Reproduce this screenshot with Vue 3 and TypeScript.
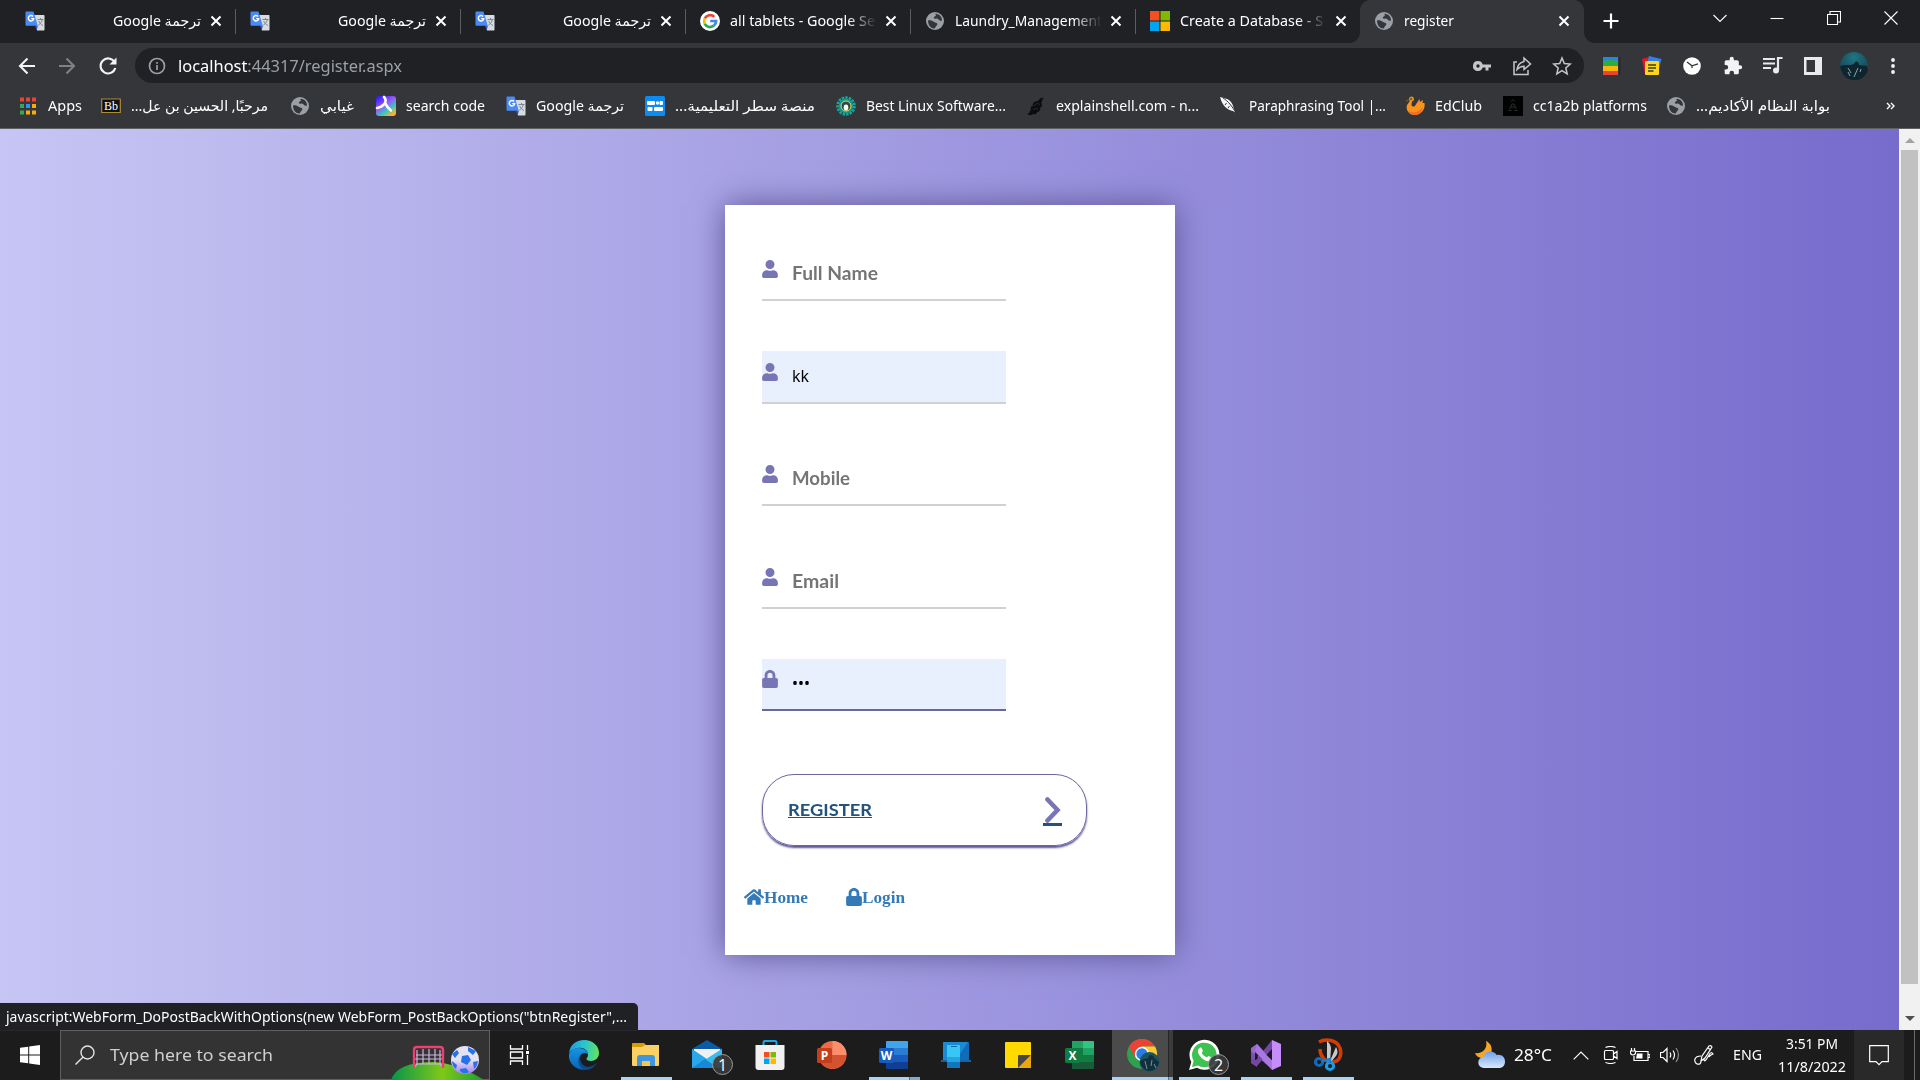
<script setup lang="ts">
import type { Directive } from 'vue'

// Stretches or condenses a single-line label to a set width in pixels.
const vFit: Directive<HTMLElement, number> = {
  mounted(el, binding) {
    const natural = el.getBoundingClientRect().width
    if (!natural) return
    el.style.transform = `scaleX(${binding.value / natural})`
    el.style.marginRight = `${binding.value - natural}px`
  },
}

const globe =
  '<circle cx="10" cy="10" r="9" fill="#9aa0a6"/><path d="M3 9.500c2.200-.6 4.300.2 5.600 1.300 1.400 1.200 3.100.6 3.700 1.900.5 1.200-1 2-1.700 3.100-.4.7-.2 1.700-1.100 1.700C5.800 17.500 3 14.300 3 9.500zM10.300 2.800c1.900-.1 4.300.9 5.500 2.700.9 1.300 1.200 2.800 1.100 4.200-1.400.3-2.500-.3-3.300-1.200-.8-1-2-1.100-3-.8-1.300.3-2.300-.6-1.600-1.700.5-.8 1.700-.8 1.900-1.600.1-.6-.6-.9-.6-1.600z" fill="#35363a"/>'
const translate =
  '<path d="M9 4h9.500c.6 0 1 .4 1 1v13.500c0 .6-.4 1-1 1H12z" fill="#d9dcdf"/><path d="M1.500.5h7l4.300 14.300H1.500c-.6 0-1-.4-1-1V1.500c0-.6.4-1 1-1z" fill="#4a8af4"/><path d="M9.700 14.800h3.100l-1 4.500z" fill="#2a56c6"/><path d="M8 5.400a2.700 2.700 0 1 0 .7 2.200H6.200" fill="none" stroke="#fff" stroke-width="1.400"/><path d="M12.500 8.500h6M15.500 7v1.500M17.300 8.500c-.5 2.500-2 4.500-4 5.700M13.700 10c.7 1.800 2.200 3.500 4.300 4.500" fill="none" stroke="#758591" stroke-width="1"/>'

const icons: Record<string, string> = {
  globe,
  translate,
  google:
    '<circle cx="10" cy="10" r="10" fill="#fff"/><g fill="none" stroke-width="2.700"><path d="M4.800 7.300A6 6 0 0 1 14.300 5.900" stroke="#ea4335"/><path d="M4.700 12.900A6 6 0 0 1 4.800 7.300" stroke="#fbbc05"/><path d="M13.900 14.600A6 6 0 0 1 4.700 12.900" stroke="#34a853"/><path d="M10.200 10h5.900a6 6 0 0 1-2.200 4.600" stroke="#4285f4"/></g>',
  microsoft:
    '<path d="M0 0h9.500v9.500H0z" fill="#f25022"/><path d="M10.500 0H20v9.500h-9.500z" fill="#7fba00"/><path d="M0 10.500h9.500V20H0z" fill="#00a4ef"/><path d="M10.500 10.500H20V20h-9.500z" fill="#ffb900"/>',
  apps:
    '<path d="M2 1.500h4v4H2zM8 1.500h4v4H8zM14 1.500h4v4h-4z" fill="#ea4335"/><path d="M2 8h4v4H2zM2 14.500h4v4H2z" fill="#34a853"/><path d="M8 8h4v4H8z" fill="#2196f3"/><path d="M14 8h4v4h-4zM8 14.500h4v4H8zM14 14.500h4v4h-4z" fill="#fbab05"/>',
  bb: '<path d="M.7 3h18.600v13.500H.7z" fill="#111" stroke="#ab8b3a" stroke-width="1.200"/><text x="10" y="14" text-anchor="middle" font-family="Liberation Serif, serif" font-weight="400" font-size="12" textLength="14" lengthAdjust="spacingAndGlyphs" fill="#fff">Bb</text>',
  search:
    '<defs><linearGradient id="sc" x1="0" y1="0" x2=".7" y2="1"><stop offset=".1" stop-color="#3a22f5"/><stop offset=".5" stop-color="#9a5cf5"/><stop offset=".75" stop-color="#35c8c0"/><stop offset="1" stop-color="#ffb02e"/></linearGradient></defs><rect width="20" height="20" rx="3" fill="url(#sc)"/><path d="M8 1c2 2 2 5 0 7.500C6 10.500 4 11.500 1 12M9.500 7.500c1 3 3 5 5.500 7" fill="none" stroke="#fff" stroke-width="2.600" stroke-linecap="round"/>',
  satr:
    '<rect width="20" height="20" rx="1.500" fill="#0c8cf0"/><rect x="2" y="5" width="8" height="4" rx="1" fill="#fff"/><circle cx="12.500" cy="7" r="1.700" fill="#fff"/><rect x="14.500" y="5" width="3.500" height="4" rx="1" fill="#fff"/><rect x="2.500" y="11" width="5" height="4" rx="1" fill="#fff"/><rect x="9" y="11" width="9" height="4" rx="1" fill="#fff"/>',
  linux:
    '<circle cx="10" cy="10" r="8.300" fill="none" stroke="#13a89e" stroke-width="3" stroke-dasharray="2.400 1.070"/><circle cx="10" cy="10" r="7.300" fill="#12988f"/><circle cx="10" cy="10" r="5" fill="#33484a" stroke="#e3d94a" stroke-width="1"/><ellipse cx="10" cy="11.500" rx="2.300" ry="3" fill="#fff"/>',
  shell:
    '<path d="M12 5c1.500-3 4.500-4 6-3-2 0-1 3-3 5 2 1 1 4-1 5 1 2-1 4-3 4 0 2-3 3-4 2-2 2-5 1-6 0 3-.5 2-3 4-4-1-2 0-4 2-4-1-2 1-5 5-5z" fill="#0c0d0e"/><path d="M8 10c2-3 5-3 6-1M7 14c2-2 4-2 5 0" fill="none" stroke="#35363a" stroke-width=".8"/>',
  feather:
    '<path d="M1 1c4 1 9 2 11 5 3 4 2 7 5 11l-3-2C8 14 3 9 1 1z" fill="#f4f4f4"/><path d="M4 2c5 3 9 8 13 15M6 9l1.500-2M9 12l1.500-2" stroke="#222327" fill="none" stroke-width=".9"/>',
  edclub:
    '<path d="M2 9c2-2 3-5 5-8 1 1 1 2 0 4l-.5 4c1 2 3 2 4 0l4-6 .5 3 3-2-.5 3 2 0c1 5-2 11-9 12C4 19.500.5 14 2 9z" fill="#f9931d"/><path d="M3 14c4 4 10 3 15-3-1 5-4 8-8 8-3 0-6-2-7-5z" fill="#f26d21"/><path d="M.5 4.500 4 3 3 6z" fill="#6a5a20"/><circle cx="6.500" cy="3" r="2.500" fill="#d9901b"/><circle cx="6" cy="3" r=".8" fill="#222"/>',
  cc: '<rect width="20" height="20" fill="#020202"/><path d="M8.500 5.500c0-2 3-2 3 0M6.500 13l2.500-5h2l2.500 5M5.500 14.500h3M11.500 14.500h3M8 11h4" fill="none" stroke="#2d3433" stroke-width=".9"/>',
}

const tabs = [
  { icon: 'translate', title: 'ترجمة Google', rtl: true, w: 88 },
  { icon: 'translate', title: 'ترجمة Google', rtl: true, w: 88 },
  { icon: 'translate', title: 'ترجمة Google', rtl: true, w: 88 },
  { icon: 'google', title: 'all tablets - Google Se', w: 145, fade: true },
  { icon: 'globe', title: 'Laundry_Management', w: 147, fade: true },
  { icon: 'microsoft', title: 'Create a Database - S', w: 143, fade: true },
  { icon: 'globe', title: 'register', w: 50, active: true },
]

const bookmarks = [
  { icon: 'apps', title: 'Apps', w: 34 },
  { icon: 'bb', title: 'مرحبًا, الحسين بن عل...', w: 137, rtl: true },
  { icon: 'globe', title: 'غيابي', w: 34, rtl: true },
  { icon: 'search', title: 'search code', w: 79 },
  { icon: 'translate', title: 'ترجمة Google', w: 88, rtl: true },
  { icon: 'satr', title: 'منصة سطر التعليمية...', w: 140, rtl: true },
  { icon: 'linux', title: 'Best Linux Software...', w: 140 },
  { icon: 'shell', title: 'explainshell.com - n...', w: 143 },
  { icon: 'feather', title: 'Paraphrasing Tool |...', w: 137 },
  { icon: 'edclub', title: 'EdClub', w: 47 },
  { icon: 'cc', title: 'cc1a2b platforms', w: 114 },
  { icon: 'globe', title: 'بوابة النظام الأكاديم...', w: 134, rtl: true },
]

const userPath =
  'M224 256a128 128 0 1 0 0-256 128 128 0 0 0 0 256zm89.600 32h-16.700a174 174 0 0 1-145.800 0h-16.700A134.400 134.400 0 0 0 0 422.400V464c0 26.500 21.500 48 48 48h352c26.500 0 48-21.500 48-48v-41.600A134.400 134.400 0 0 0 313.600 288z'
const lockPath =
  'M400 224h-24v-72C376 68.200 307.800 0 224 0S72 68.200 72 152v72H48c-26.500 0-48 21.500-48 48v192c0 26.500 21.500 48 48 48h352c26.500 0 48-21.500 48-48V272c0-26.500-21.500-48-48-48zm-104 0H152v-72c0-39.700 32.300-72 72-72s72 32.300 72 72v72z'

const fields = [
  { hint: 'Full Name', w: 86, path: userPath },
  { value: 'kk', w: 17, path: userPath },
  { hint: 'Mobile', w: 58, path: userPath },
  { hint: 'Email', w: 47, path: userPath },
  { value: '•••', w: 18, path: lockPath, focus: true, secret: true },
]

const letterBadge = (letter: string, fill: string) =>
  `<rect x="1" y="9" width="15" height="15" rx="1.500" fill="${fill}"/><text x="8.500" y="21" text-anchor="middle" font-family="Open Sans, sans-serif" font-weight="700" font-size="12" fill="#fff">${letter}</text>`
const countBadge = (n: number) =>
  `<circle cx="30.500" cy="25.500" r="10" fill="#3a3a3ae6" stroke="#9a9a9a" stroke-width="1"/><text x="30.500" y="31.500" text-anchor="middle" font-family="Open Sans, sans-serif" font-size="16" fill="#fff">${n}</text>`

const apps = [
  {
    name: 'edge',
    svg: '<defs><linearGradient id="e1" x1="0" y1=".3" x2="1" y2=".4"><stop offset="0" stop-color="#1b9de2"/><stop offset=".5" stop-color="#2bc3d2"/><stop offset="1" stop-color="#62e35a"/></linearGradient><linearGradient id="e2" x1="0" y1="0" x2="0" y2="1"><stop offset="0" stop-color="#1795df"/><stop offset="1" stop-color="#0a63b5"/></linearGradient></defs><path d="M1 14C2 6 8 1 16 1c9 0 15 6 15 13 0 5-4 8-8 8-3 0-5-1-4.500-2.500.8-1 1.500-2 1.500-4C20 11 15 8 10 9c-4 .8-7 2.500-9 5z" fill="url(#e1)"/><path d="M1 15c2-4 6-6 10-6 5 0 9 3 9 6.500C16 12 11 15 12 21c.7 4 4 7 8 8-2 1.500-5 2-7 1.500C5 29 0 22 1 15z" fill="url(#e2)"/><path d="M16 14c-4 1-5.500 7-2 11 4 4.500 11 3.500 15.500-2C27 28 22 31 17.500 31 13 30 9.500 25 10.500 20c.6-3 3-5.500 5.500-6z" fill="#0b4a8f"/>',
  },
  {
    name: 'explorer',
    svg: '<path d="M2 5q0-1 1-1h11l2 2-2 3H2z" fill="#d79b08"/><path d="M2 8h10l3-2h14v20q0 1-1 1H3q-1 0-1-1z" fill="#fbd163"/><path d="M7 27v-8q0-3 3-3h12q3 0 3 3v8h-5v-5h-8v5z" fill="#3f95df"/><path d="M12 22h8v4h-8z" fill="#f5c549"/>', run: true,
  },
  {
    name: 'mail',
    svg: '<path d="M0 10 15 1l15 9v11H0z" fill="#0a5ba8"/><path d="M2 10h26v13H2z" fill="#f0f0f2"/><path d="M0 10l15 10L30 10v19H0z" fill="#2aa7ea"/><path d="M0 29 30 10v19z" fill="#32bdf5"/><path d="M0 29h26L13 20z" fill="#1489d8"/>' + countBadge(1),
  },
  {
    name: 'store',
    svg: '<path d="M9.500 8V3.500q0-1.500 1.500-1.500h10q1.500 0 1.500 1.500V8" fill="none" stroke="#20a6e8" stroke-width="2"/><path d="M1.500 6h29v22q0 3-3 3h-23q-3 0-3-3z" fill="#f1f1f1"/><path d="M10 13h5.500v5.500H10z" fill="#f25022"/><path d="M16.500 13H22v5.500h-5.500z" fill="#7fba00"/><path d="M10 19.500h5.500V25H10z" fill="#00a4ef"/><path d="M16.500 19.500H22V25h-5.500z" fill="#ffb900"/>',
  },
  {
    name: 'powerpoint',
    svg: '<circle cx="16.500" cy="16" r="14" fill="#ed6c47"/><path d="M16.500 2a14 14 0 0 1 14 14h-14z" fill="#ff8f6b"/><path d="M30.500 16a14 14 0 0 1-26.500 6l12-6z" fill="#d35230"/>' + letterBadge('P', '#c43e1c'),
  },
  {
    name: 'word',
    svg: '<path d="M8 3q0-1 1-1h20q1 0 1 1v6H8z" fill="#41a5ee"/><path d="M8 9h22v7H8z" fill="#2b7cd3"/><path d="M8 16h22v7H8z" fill="#185abd"/><path d="M8 23h22v6q0 1-1 1H9q-1 0-1-1z" fill="#103f91"/>' + letterBadge('W', '#185abd'), run: true, multi: true,
  },
  {
    name: 'phone',
    svg: '<path d="M3 4q0-1 1-1h24q1 0 1 1v18l2 1H1l2-2z" fill="#0f6cb8"/><path d="M3 4q0-1 1-1h24l-12 18H3z" fill="#1b8ad4"/><path d="M1 21h30v2H1z" fill="#1263a8"/><path d="M7 6h13v22q0 1-1 1H8q-1 0-1-1z" fill="#38c6f4"/><path d="M7 18h13v5H7z" fill="#22a5e0"/><path d="M7 23h13v5q0 1-1 1H8q-1 0-1-1z" fill="#1177bd"/><path d="M11 7.500h6" stroke="#0e6aa7"/>',
  },
  {
    name: 'notes',
    svg: '<path d="M3 4q0-1 1-1h24q1 0 1 1v24q0 1-1 1H4q-1 0-1-1z" fill="#ffd900"/><path d="M29 16v12q0 1-1 1H16z" fill="#e9a90e"/><path d="M16 29V17q0-1 1-1h12z" fill="#484644"/>',
  },
  {
    name: 'excel',
    svg: '<path d="M8 2h11v7H8z" fill="#21a366"/><path d="M19 2h10q1 0 1 1v6H19z" fill="#33c481"/><path d="M8 9h11v7H8z" fill="#107c41"/><path d="M19 9h11v7H19z" fill="#21a366"/><path d="M8 16h22v7H8z" fill="#107c41"/><path d="M8 23h22v6q0 1-1 1H8z" fill="#185c37"/>' + letterBadge('X', '#107c41'),
  },
  {
    name: 'chrome',
    svg: '<g transform="translate(1 -1)"><circle cx="15" cy="16" r="15" fill="#2fa04f"/><path d="M2 8.500A15 15 0 0 1 28 8.500H15L8.500 20z" fill="#ea4335"/><path d="M28 8.500A15 15 0 0 1 15 31l6.500-11L15 8.500z" fill="#fcc934"/><circle cx="15" cy="16" r="7.200" fill="#fff"/><circle cx="15" cy="16" r="5.700" fill="#2a7de9"/><circle cx="22.500" cy="24" r="10" fill="#1c5360"/><path d="M13 24c3-4 6-3 8-4 0-4 6-4 6 0l5 4c-1 6-6 9-9 9-5 0-9-4-10-9z" fill="#12303c"/><path d="m18 23 2 8M25 22l-1 6M27 26l2 4" stroke="#6f97a0" stroke-width="1"/></g>', run: true, multi: true, active: true,
  },
  {
    name: 'whatsapp',
    svg: '<path d="M1 31l2.300-8A15 15 0 1 1 9 28.800z" fill="#fff"/><path d="M4 28l1.600-6A12.300 12.300 0 1 1 10 26.500z" fill="#3ec14f"/><path d="M11.500 9c1-.8 2-.5 2.500.8l.8 2c.2.7-1 1.700-1 2.200 1 2 2.600 3.500 4.800 4.300.6 0 1.400-1.600 2.100-1.300l2.600 1.300c1 .5-.2 3-1.400 3.600-2 .9-5.300-.3-8-2.700-2.500-2.200-4.500-5.600-4-7.700.2-1 .9-1.900 1.600-2.500z" fill="#fff"/>' + countBadge(2), run: true,
  },
  {
    name: 'vs',
    svg: '<path d="M1 10 7 5v6L5 13v9l2 1v5l-6-4z" fill="#7b50ad"/><path d="M7 5 23 22v9L1 12V9z" fill="#9a68d0"/><path d="M22 1v9L7 27l-6-3v-4l5 1z" fill="#7547a5"/><path d="M5 13v8l3.500-4.500z" fill="#1c1c1c"/><path d="m7 5 15 17v9L5 12z" fill="#a877e2"/><path d="m22 1 9 4v22l-9 4z" fill="#c58dfa"/><path d="M22 10.500 16.500 16l5.500 5z" fill="#1c1c1c"/>', run: true,
  },
  {
    name: 'snip',
    svg: '<g transform="translate(2 0)"><path d="M5 3C12-1 23 1 26 9c2 6 0 14-8 14-7 0-12-6-12-13" fill="none" stroke="#d83b01" stroke-width="3.500"/><path d="M13 22V2q4 3 4 8l-1 13zM16 22 22 8q3 5 0 9l-5 6z" fill="#c8c8c8"/><circle cx="5" cy="23" r="3.600" fill="none" stroke="#0f6cbd" stroke-width="3"/><circle cx="16" cy="27" r="3.600" fill="none" stroke="#189fe6" stroke-width="3"/><path d="m8 22 8-2v4" fill="none" stroke="#147ed0" stroke-width="2.500"/></g>', run: true,
  },
] as { name: string; svg: string; run?: boolean; multi?: boolean; active?: boolean }[]
</script>

<template>
  <div class="screen">
    <header class="strip">
      <div v-for="(tab, i) in tabs" :key="i" class="tab" :class="{ active: tab.active, last: i === 5 }">
        <svg class="fav" viewBox="0 0 20 20" v-html="icons[tab.icon]" />
        <div class="title" :class="{ rtl: tab.rtl, fade: tab.fade }">
          <span v-fit="tab.w" class="fit" :dir="tab.rtl ? 'rtl' : 'ltr'">{{ tab.title }}</span>
        </div>
        <svg class="x" viewBox="0 0 12 12"><path d="m1.500 1.500 9 9m0-9-9 9" /></svg>
      </div>
      <svg class="plus" viewBox="0 0 16 16"><path d="M8 .5v15M.5 8h15" /></svg>
      <div class="controls">
        <svg viewBox="0 0 14 14"><path d="m.5 4 6.500 6.500L13.500 4" /></svg>
        <svg viewBox="0 0 14 14"><path d="M.5 7.500h13" /></svg>
        <svg viewBox="0 0 14 14"><path d="M.5 3.500h10v10H.5zM3 3V.5h10.500V11H11" /></svg>
        <svg viewBox="0 0 14 14"><path d="m.5.5 13 13m0-13-13 13" /></svg>
      </div>
    </header>

    <div class="toolbar">
      <svg class="nav" viewBox="0 0 20 20"><path d="M18 10H3m7.500-7.500L3 10l7.500 7.500" /></svg>
      <svg class="nav dim" viewBox="0 0 20 20"><path d="M2 10h15M9.500 2.500 17 10l-7.500 7.500" /></svg>
      <svg class="nav" viewBox="0 0 20 20"><path d="M16.500 6A7.500 7.500 0 1 0 17.300 12" /><path class="solid" d="M18.500 1.500v7h-7z" /></svg>
      <div class="address">
        <svg class="info" viewBox="0 0 18 18"><circle cx="9" cy="9" r="7.500" /><path d="M9 8v5M9 5v1.700" /></svg>
        <span v-fit="224" class="fit url"><b>localhost</b>:44317/register.aspx</span>
        <div class="actions">
          <svg viewBox="0 0 20 20"><path class="fill" d="M6 5a5 5 0 1 0 4.700 6.600h2.800v3h3v-3H19V8.400h-8.300A5 5 0 0 0 6 5zm0 3.300a1.700 1.700 0 1 1 0 3.400 1.700 1.700 0 0 1 0-3.400z" /></svg>
          <svg viewBox="0 0 20 20"><path d="M5 6H2v12.500h14V14M12 2l6.500 6L12 13.500v-3.300c-3 0-5 1-7 3.300.5-4 3-7 7-8z" /></svg>
          <svg viewBox="0 0 20 20"><path d="m10 2 2.300 5.500 6 .5-4.500 3.900 1.400 5.900L10 14.600l-5.200 3.200 1.400-5.900L1.700 8l6-.5z" /></svg>
        </div>
      </div>
      <div class="exts">
        <svg viewBox="0 0 20 20"><path d="M17 1h1.500v18H17z" fill="#292a2d" /><path d="M1 1h15v5H1z" fill="#1e88f0" /><path d="M1 5q8-2 15 0v5H1z" fill="#2fac40" /><path d="M1 10h15v5H1z" fill="#fcb60a" /><path d="M1 15h15v4H1z" fill="#ea4335" /></svg>
        <svg viewBox="0 0 20 20"><path d="m0 3 7-2 3 15-7 2z" fill="#e8122a" /><path d="m7 0 12.500 3-3 12L4 12z" fill="#2f80ed" /><rect x="3" y="5" width="14" height="14" rx="1" fill="#fdd51c" /><path d="M6 9h8M6 12h8M6 15h5.500" stroke="#3c3c22" stroke-width="1.300" /></svg>
        <svg viewBox="0 0 20 20"><circle cx="10" cy="10" r="8.800" fill="#fff" /><path d="m5 6 5 3.800 6-2M10 9.800V12" stroke="#333" stroke-width="1.300" fill="none" /></svg>
        <svg viewBox="0 0 24 24"><path fill="#f1f3f4" d="M20.500 11H19V7c0-1.100-.9-2-2-2h-4V3.500a2.500 2.500 0 0 0-5 0V5H4c-1.100 0-2 .9-2 2v3.800h1.500a2.700 2.700 0 0 1 0 5.400H2V20c0 1.100.9 2 2 2h3.800v-1.500a2.700 2.700 0 0 1 5.400 0V22H17c1.100 0 2-.9 2-2v-4h1.500a2.500 2.500 0 0 0 0-5z" /></svg>
        <svg viewBox="0 0 20 20"><path d="M0 3h12M0 7.500h12M0 12h8" stroke="#e8eaed" stroke-width="1.900" /><path d="M15 14V2h4.500" fill="none" stroke="#e8eaed" stroke-width="2.200" /><circle cx="13" cy="14.500" r="3" fill="#e8eaed" /></svg>
        <svg viewBox="0 0 20 20"><path fill="#e8eaed" fill-rule="evenodd" d="M1 1h18v18H1zM3.500 4v12H12V4z" /></svg>
      </div>
      <svg class="avatar" viewBox="0 0 28 28">
        <defs>
          <radialGradient id="sea" cx=".5" cy=".2" r=".8"><stop offset="0" stop-color="#1f7685" /><stop offset="1" stop-color="#123a48" /></radialGradient>
        </defs>
        <circle cx="14" cy="14" r="14" fill="url(#sea)" /><path d="M0 14c6-2 10 0 14-2 1-4 5-3 5 1l8 1 1 4a14 14 0 0 1-27 0z" fill="#10242e" /><path d="m8 16 3 5M18 16l-4 9M21 17l-1 3M8 20l2 4" stroke="#7fa9b6" stroke-width="1" />
      </svg>
      <svg class="dots" viewBox="0 0 4 18"><circle cx="2" cy="3" r="1.900" /><circle cx="2" cy="9" r="1.900" /><circle cx="2" cy="15" r="1.900" /></svg>
    </div>

    <nav class="bookmarks">
      <div v-for="(b, i) in bookmarks" :key="i" class="mark">
        <svg class="fav" viewBox="0 0 20 20" v-html="icons[b.icon]" />
        <span v-fit="b.w" class="fit" :dir="b.rtl ? 'rtl' : 'ltr'">{{ b.title }}</span>
      </div>
      <svg class="more" viewBox="0 0 9 8"><path d="m1 1 3 3-3 3m4-6 3 3-3 3" /></svg>
    </nav>

    <main class="page">
      <div class="canvas">
        <section class="card">
          <form class="fields">
            <div v-for="(f, i) in fields" :key="i" class="field" :class="{ filled: f.value, focus: f.focus }">
              <svg viewBox="0 0 448 512"><path :d="f.path" /></svg>
              <span v-fit="f.w" class="fit" :class="{ hint: f.hint, secret: f.secret }">{{ f.hint || f.value }}</span>
            </div>
          </form>
          <a class="submit">
            <span v-fit="84" class="fit">REGISTER</span>
            <span class="go"><svg viewBox="0 0 17 26"><path d="m3.500 2.500 10 10.500-10 10.500" /></svg></span>
          </a>
          <div class="links">
            <a><svg class="home" viewBox="0 0 576 512"><path d="M280.400 148.300 96 300.100V464a16 16 0 0 0 16 16l112-.3a16 16 0 0 0 16-16V368a16 16 0 0 1 16-16h64a16 16 0 0 1 16 16v95.600a16 16 0 0 0 16 16L464 480a16 16 0 0 0 16-16V300L295.700 148.300a12 12 0 0 0-15.300 0zM571.600 251.500 488 182.600V44a12 12 0 0 0-12-12h-56a12 12 0 0 0-12 12v72.600L318.500 43a48 48 0 0 0-61 0L4.300 251.500a12 12 0 0 0-1.600 16.900l25.500 31a12 12 0 0 0 17 1.600l235.200-193.700a12 12 0 0 1 15.300 0L530.900 301a12 12 0 0 0 17-1.600l25.500-31a12 12 0 0 0-1.800-16.900z" /></svg><span v-fit="44" class="fit">Home</span></a>
            <a><svg viewBox="0 0 448 512"><path :d="lockPath" /></svg><span v-fit="43" class="fit">Login</span></a>
          </div>
        </section>
        <div class="status"><span v-fit="621" class="fit">javascript:WebForm_DoPostBackWithOptions(new WebForm_PostBackOptions("btnRegister",...</span></div>
      </div>
      <div class="scrollbar">
        <svg viewBox="0 0 10 5"><path d="M0 5 5 0l5 5z" fill="#a3a3a3" /></svg>
        <div class="thumb" />
        <svg viewBox="0 0 10 5"><path d="m0 0 5 5 5-5z" fill="#505050" /></svg>
      </div>
    </main>

    <footer class="taskbar">
      <svg class="start" viewBox="0 0 20 20"><path d="M0 2.800 8.200 1.700v7.800H0zM9.200 1.500 20 0v9.500H9.200zM0 10.500h8.200v7.800L0 17.200zM9.200 10.500H20V20L9.200 18.500z" /></svg>
      <div class="searchbox">
        <svg class="lens" viewBox="0 0 20 20"><circle cx="12.500" cy="7.500" r="6.500" /><path d="m7.800 12.200-7.300 7.300" /></svg>
        <span v-fit="163" class="fit">Type here to search</span>
        <svg class="scene" viewBox="0 0 98 36">
          <defs>
            <linearGradient id="hill"><stop offset="0" stop-color="#06944a" /><stop offset=".55" stop-color="#80c818" /><stop offset="1" stop-color="#18a030" /></linearGradient>
            <linearGradient id="ball" x1="0" y1="0" x2="0" y2="1"><stop offset=".5" stop-color="#e4e2f0" /><stop offset="1" stop-color="#a37cf5" /></linearGradient>
          </defs>
          <path d="M0 36Q6 18 42 18q24 1 51 18z" fill="url(#hill)" />
          <path d="M26 6v14l-3 4M49 6v14l4 4M26 20h24M25 11h27M24 15h29M32 5v15M38 5v15M44 5v15" fill="none" stroke="#cfb4dc" stroke-width="1.200" />
          <path d="M23 24V6q0-3 3-3h23q3 0 3 3v18" fill="none" stroke="#ef3e70" stroke-width="2.400" />
          <circle cx="74" cy="16" r="14" fill="url(#ball)" />
          <path d="m71 12 6-1 3 5-4 5-6-3zM77 3l8 4-3 4-5-4zM61 10l5-4 2 3-4 5zM61 17l5 4-1 4q-4-3-4-8zM82 18l5-1q-1 6-4 8zM69 25l6-1 3 4q-5 3-9-1z" fill="#2671ee" />
        </svg>
      </div>
      <svg class="view" viewBox="0 0 20 20"><path d="M1.500 0v4h12V0M1.500 20v-4h12v4M1.500 7h12v6h-12zM18.500 0v5M18.500 10v10" /><path class="solid" d="M17 6h3v3h-3z" /></svg>
      <div class="apps">
        <div v-for="a in apps" :key="a.name" class="app" :class="{ run: a.run, multi: a.multi, on: a.active }">
          <svg viewBox="0 0 32 32" v-html="a.svg" />
        </div>
      </div>
      <div class="tray">
        <svg class="weather" viewBox="0 0 30 28"><defs><linearGradient id="cl" x1="0" y1="0" x2="0" y2="1"><stop offset="0" stop-color="#6f9fe9" /><stop offset="1" stop-color="#d9e8fb" /></linearGradient></defs><path d="M11 0c9 4 7 17-3 17-4 0-7-2-8-5 7 1 13-4 11-12z" fill="#f6a623" /><path d="M9 27a5.500 5.500 0 0 1-.5-11c1-7 11-7 13-2 5-1 8.500 2 8.500 6.500S27 27 24 27z" fill="url(#cl)" /></svg>
        <span v-fit="38" class="fit temp">28°C</span>
        <svg class="up" viewBox="0 0 16 9"><path d="m.7 8.300 7.300-7.300 7.300 7.300" /></svg>
        <svg class="meet" viewBox="0 0 16 18"><path d="M1.500 5.500q0-1 1-1h7q1 0 1 1v7q0 1-1 1h-7q-1 0-1-1zM10.500 8l3.500-2.500v7L10.500 10M2.500 1.500q5-2 10 0M2.500 16.500q5 2 10 0" /></svg>
        <svg class="battery" viewBox="0 0 20 14"><path d="M6 3.500h12v9H4V8M18.500 6.500h1.500v3h-1.500M.5 3h5v2.500q-2.500 3-5 0zM1.500 3V0M4.500 3V0" /><path class="solid" d="M7 5.500h5.500v5H6z" /></svg>
        <svg class="volume" viewBox="0 0 20 16"><path d="M.5 5.500h2.500l4-4v13l-4-4H.5zM10 5.500q1.500 2.500 0 5M13 3.500q3 4.500 0 9" /><path d="M16 1q5 7 0 14" opacity=".5" /></svg>
        <svg class="pen" viewBox="0 0 21 20"><path d="m7 16 1-5 7-10q2-1 3 1l-7 11zM7 11q-5 0-6 3t2 5q4 1 4-3M10 14q0 5 5-4 2-4 4-1-3 1-4 3M14 3l3 2" /></svg>
        <span v-fit="29" class="fit lang">ENG</span>
        <div class="clock">
          <span v-fit="52" class="fit">3:51 PM</span>
          <span v-fit="68" class="fit">11/8/2022</span>
        </div>
        <div class="notice"><svg viewBox="0 0 20 21"><path d="M.7.7h18.600v16H13l-3 3-3-3H.7z" /></svg></div>
        <div class="peek" />
      </div>
    </footer>
  </div>
</template>

<style>
body {
  margin: 0;
  overflow: hidden;
}
</style>

<style scoped>
* {
  box-sizing: border-box;
}
svg {
  display: block;
  flex: none;
}
.screen {
  width: 1920px;
  height: 1080px;
  display: flex;
  flex-direction: column;
  overflow: hidden;
  background: #35363a;
  color: #fff;
  font: 14.3px/20px 'Noto Sans', 'Open Sans', 'DejaVu Sans', sans-serif;
}
.fit {
  display: inline-block;
  flex: none;
  white-space: nowrap;
  transform-origin: 0 50%;
}

/* tab strip */
.strip {
  height: 43px;
  display: flex;
  padding-left: 10px;
  background: #202124;
}
.tab {
  position: relative;
  width: 225px;
  height: 43px;
  display: flex;
  align-items: center;
  padding: 0 0 1px 15px;
}
.tab:not(.active):not(.last)::after {
  content: '';
  position: absolute;
  right: -1px;
  top: 9px;
  width: 1px;
  height: 25px;
  background: #5b5d60;
}
.tab.active {
  width: 224px;
  padding-left: 14px;
  border-radius: 10px 10px 0 0;
  background: #35363a;
}
.tab.active::before,
.tab.active::after {
  content: '';
  position: absolute;
  bottom: 0;
  width: 10px;
  height: 10px;
}
.tab.active::before {
  left: -10px;
  background: radial-gradient(circle at 0 0, transparent 9.5px, #35363a 10px);
}
.tab.active::after {
  right: -10px;
  background: radial-gradient(circle at 100% 0, transparent 9.5px, #35363a 10px);
}
.fav {
  width: 20px;
  height: 20px;
  overflow: visible;
}
.title {
  width: 148px;
  margin-left: 10px;
  display: flex;
}
.title.rtl {
  width: 146px;
  margin-right: 2px;
  justify-content: flex-end;
}
.title.fade {
  mask-image: linear-gradient(90deg, #000 118px, transparent 147px);
}
.x {
  width: 12px;
  height: 12px;
  margin-left: 7px;
  stroke: #fff;
  stroke-width: 2;
}
.tab.active .x {
  margin-left: 6px;
}
.plus {
  width: 16px;
  height: 16px;
  margin: 13px 0 0 19px;
  stroke: #fff;
  stroke-width: 2.2;
}
.controls {
  display: flex;
  gap: 43px;
  margin: 11px 0 0 94px;
}
.controls svg {
  width: 14px;
  height: 14px;
  fill: none;
  stroke: #fff;
  stroke-width: 1.1;
}

/* toolbar */
.toolbar {
  height: 45px;
  display: flex;
  align-items: center;
  padding-left: 17px;
}
.nav {
  width: 20px;
  height: 20px;
  margin-right: 20px;
  fill: none;
  stroke: #f1f3f4;
  stroke-width: 2.1;
}
.nav.dim {
  margin-right: 21px;
  stroke: #7f8185;
}
.nav .solid {
  fill: #f1f3f4;
  stroke: none;
}
.address {
  width: 1449px;
  height: 35px;
  margin-left: -3px;
  display: flex;
  align-items: center;
  padding: 0 12px 0 13px;
  border-radius: 18px;
  background: #202124;
}
.info {
  width: 18px;
  height: 18px;
  margin-right: 12px;
  fill: none;
  stroke: #9aa0a6;
  stroke-width: 1.7;
}
.url {
  font-size: 16.5px;
  color: #9aa0a6;
}
.url b {
  font-weight: 400;
  color: #fff;
}
.actions {
  display: flex;
  gap: 20px;
  margin-left: auto;
}
.actions svg {
  width: 20px;
  height: 20px;
  fill: none;
  stroke: #c4c7ca;
  stroke-width: 1.5;
}
.actions .fill {
  fill: #c4c7ca;
  stroke: none;
}
.exts {
  display: flex;
  gap: 20.2px;
  margin-left: 18px;
}
.exts svg {
  width: 20px;
  height: 20px;
}
.avatar {
  width: 28px;
  height: 28px;
  margin-left: 17px;
}
.dots {
  width: 4px;
  height: 18px;
  margin-left: 23px;
  fill: #f1f3f4;
}

/* bookmarks */
.bookmarks {
  height: 41px;
  display: grid;
  grid-template-columns: 83px 189px 86px 130px 139px 191px 190px 193px 186px 98px 163px 220px 10px;
  align-items: center;
  padding: 0 0 4px 18px;
  border-bottom: 1px solid #5f6064;
}
.mark {
  display: flex;
  align-items: center;
  gap: 9.5px;
}
.more {
  width: 9px;
  height: 8px;
  fill: none;
  stroke: #fff;
  stroke-width: 1.4;
}

/* page */
.page {
  height: 901px;
  display: flex;
}
.canvas {
  position: relative;
  width: 1899px;
  padding: 76px 0 0 725px;
  background: linear-gradient(90deg, #c7c5f4, #776bcc);
}
.card {
  width: 449.5px;
  height: 750px;
  padding: 43px 0 0 37px;
  background: #fff;
  box-shadow: 0 0 30px #5c5696;
}
.fields {
  display: flex;
  flex-direction: column;
  gap: 49.5px;
}
.field {
  width: 244px;
  height: 53px;
  display: flex;
  align-items: flex-start;
  border-bottom: 2px solid #d1d1d4;
  color: #000;
}
.field svg {
  width: 16px;
  height: 18px;
  margin: 12px 14px 0 0;
  fill: #7875b5;
}
.field .fit {
  margin-top: 15px;
  font-size: 16px;
}
.field .hint {
  font: 700 18px/20px Lato, 'Open Sans', sans-serif;
  color: #757575;
}
.field .secret {
  margin-top: 14px;
}
.field.filled {
  background: #e8f0fe;
}
.field.focus {
  height: 52px;
  margin-top: 1px;
  border-color: #6a679e;
}
.field.focus svg {
  margin-top: 11px;
}
.submit {
  width: 325px;
  height: 72px;
  margin-top: 63px;
  display: flex;
  align-items: center;
  justify-content: space-between;
  padding: 0 24px 0 25px;
  border: 1px solid #6a679e;
  border-radius: 32px;
  box-shadow: 0 2px 2px #5c5696;
  color: #23527c;
  font: 700 17.5px/20px Lato, 'Open Sans', sans-serif;
  text-decoration: underline;
}
.go {
  width: 19px;
  border-bottom: 3px solid #23527c;
}
.go svg {
  width: 17px;
  height: 26px;
  margin: 2px 0 0 1px;
  fill: none;
  stroke: #7875b5;
  stroke-width: 4.6;
  stroke-linecap: round;
}
.links {
  display: flex;
  gap: 38px;
  margin: 41px 0 0 -18px;
  color: #337ab7;
  font: 700 17.5px/20px 'Liberation Serif', serif;
}
.links a {
  display: flex;
  align-items: center;
}
.links svg {
  width: 16px;
  height: 18px;
  fill: #337ab7;
}
.links svg.home {
  width: 20px;
}
.status {
  position: absolute;
  left: 0;
  bottom: 0;
  width: 638px;
  height: 27px;
  padding: 4px 0 0 5.5px;
  border-top-right-radius: 5px;
  background: #202124;
  box-shadow: 0 0 1px #9b97c4;
}
.scrollbar {
  width: 21px;
  display: flex;
  flex-direction: column;
  align-items: center;
  justify-content: space-between;
  padding: 9px 0;
  background: #f1f1f1;
}
.scrollbar svg {
  width: 10px;
  height: 5px;
}
.thumb {
  width: 17px;
  height: 834px;
  margin-bottom: 25px;
  background: #c1c1c1;
}

/* taskbar */
.taskbar {
  height: 50px;
  display: flex;
  align-items: center;
  background: #1c1c1c;
}
.start {
  width: 20px;
  height: 20px;
  margin: 0 20px;
  fill: #fff;
}
.searchbox {
  position: relative;
  width: 430px;
  height: 50px;
  display: flex;
  align-items: center;
  padding-left: 14px;
  border: 1px solid #5f5f5f;
  background: #333;
  font-size: 17px;
  color: #cfcfcf;
}
.lens {
  width: 20px;
  height: 20px;
  margin-right: 15px;
  fill: none;
  stroke: #e4e4e4;
  stroke-width: 1.4;
}
.scene {
  position: absolute;
  right: 0;
  bottom: -1px;
  width: 98px;
  height: 36px;
}
.view {
  width: 20px;
  height: 20px;
  margin: 0 24px 0 19px;
  fill: none;
  stroke: #fff;
  stroke-width: 1.3;
}
.view .solid,
.tray .solid {
  fill: #fff;
  stroke: none;
}
.apps {
  display: flex;
}
.app {
  position: relative;
  width: 62px;
  height: 50px;
  padding: 9px 0 0 15px;
}
.app svg {
  position: relative;
  width: 32px;
  height: 32px;
  overflow: visible;
}
.app.run::after {
  content: '';
  position: absolute;
  left: 6px;
  bottom: 0;
  width: 51px;
  height: 3px;
  background: #a6d3fa;
}
.app.multi::after {
  background: linear-gradient(90deg, #a6d3fa 40px, #55708a 40px 41px, #83aac8 41px);
}
.app.on::before {
  content: '';
  position: absolute;
  left: 1px;
  top: 0;
  width: 61px;
  height: 50px;
  background: linear-gradient(90deg, #4b4b4b 56px, #262626 56px 57px, #3b3b3b 57px);
}
.app.on::after {
  left: 1px;
  width: 61px;
  background: linear-gradient(90deg, #a6d3fa 56px, #55708a 56px 57px, #83aac8 57px);
}
.tray {
  height: 50px;
  display: flex;
  align-items: center;
  margin-left: auto;
}
.tray svg {
  fill: none;
  stroke: #fff;
  stroke-width: 1.2;
}
.tray svg.weather {
  width: 30px;
  height: 28px;
  margin-right: 9px;
  stroke: none;
}
.temp {
  font-size: 17px;
}
.up {
  width: 16px;
  height: 9px;
  margin-left: 21px;
}
.meet {
  width: 16px;
  height: 18px;
  margin-left: 14.5px;
}
.battery {
  width: 20px;
  height: 14px;
  margin-left: 11px;
}
.volume {
  width: 20px;
  height: 16px;
  margin-left: 10px;
}
.pen {
  width: 21px;
  height: 20px;
  margin-left: 14px;
}
.lang {
  margin-left: 18px;
}
.clock {
  width: 92px;
  display: flex;
  flex-direction: column;
  align-items: center;
  gap: 3px;
  padding-left: 7px;
  line-height: 20px;
}
.notice {
  width: 50px;
  height: 50px;
  padding: 15px 0 0 15px;
  background: #292929;
}
.notice svg {
  width: 20px;
  height: 21px;
}
.peek {
  width: 1px;
  height: 50px;
  margin: 0 5px 0 10px;
  background: #6a6a6a;
}
</style>
